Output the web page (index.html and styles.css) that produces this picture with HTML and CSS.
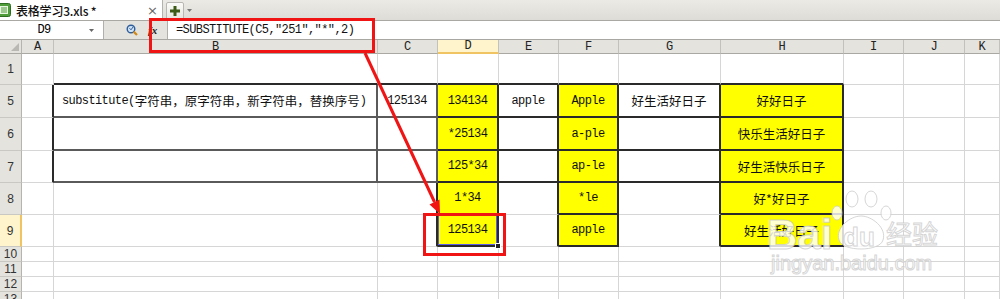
FILE: index.html
```html
<!DOCTYPE html>
<html>
<head>
<meta charset="utf-8">
<title>表格学习3.xls</title>
<link rel="stylesheet" href="styles.css">
</head>
<body>
<div class="app">
  <div class="tabbar">
    <div class="tab">
      <svg class="ticon" width="14" height="14" viewBox="0 0 14 14">
        <rect x="0.5" y="0.5" width="13" height="13" rx="2" fill="#4f9d3a" stroke="#2f6e22"/>
        <rect x="3" y="3" width="8" height="8" fill="#e8f5e0"/>
        <path d="M4 5h6M4 7h6M4 9h6" stroke="#4f9d3a" stroke-width="1"/>
      </svg>
      <span class="tname">表格学习3.xls *</span>
      <span class="tclose">×</span>
    </div>
    <div class="tadd">
      <svg width="12" height="12" viewBox="0 0 12 12"><path d="M6 1v10M1 6h10" stroke="#3d5b17" stroke-width="3"/></svg>
    </div>
    <div class="tmenu">
      <svg width="5" height="3" viewBox="0 0 5 3"><path d="M0 0h5L2.5 3z" fill="#777"/></svg>
    </div>
  </div>

  <div class="fbar">
    <div class="namebox">
      <span class="nb">D9</span>
      <svg class="dd" width="5" height="3" viewBox="0 0 5 3"><path d="M0 0h5L2.5 3z" fill="#666"/></svg>
    </div>
    <div class="tools">
      <svg class="mag" width="12" height="12" viewBox="0 0 12 12">
        <circle cx="5" cy="5" r="3.8" fill="#cfe3f7" stroke="#2f5d9a" stroke-width="1.4"/>
        <path d="M7.6 7.6L11 11" stroke="#d08a1a" stroke-width="2.2"/>
        <path d="M3.5 4.2l1.5 1.6 2.2-3" stroke="#2f5d9a" stroke-width="1" fill="none"/>
      </svg>
      <span class="fx">fx</span>
    </div>
    <div class="formula">=SUBSTITUTE(C5,"251","*",2)</div>
  </div>

  <div class="sheet">
    <div class="corner"><svg width="8" height="8" viewBox="0 0 8 8"><path d="M8 0v8H0z" fill="#b9b8b2"/></svg></div>
    <div class="ch">A</div><div class="ch">B</div><div class="ch">C</div><div class="ch on">D</div><div class="ch">E</div><div class="ch">F</div><div class="ch">G</div><div class="ch">H</div><div class="ch">I</div><div class="ch">J</div><div class="ch">K</div>

    <div class="rh">1</div>
    <div class="c"></div><div class="c B"></div><div class="c B"></div><div class="c B"></div><div class="c B"></div><div class="c B"></div><div class="c B"></div><div class="c B"></div><div class="c"></div><div class="c"></div><div class="c"></div>

    <div class="rh">5</div>
    <div class="c R"></div>
    <div class="c g R B cjk left"><span class="lat">substitute(</span>字符串，原字符串，新字符串，替换序号<span class="lat">)</span></div>
    <div class="c g R B">125134</div>
    <div class="c y R B">134134</div>
    <div class="c R B">apple</div>
    <div class="c y R B">Apple</div>
    <div class="c R B cjk">好生活好日子</div>
    <div class="c y R B cjk">好好日子</div>
    <div class="c"></div><div class="c"></div><div class="c"></div>

    <div class="rh">6</div>
    <div class="c R"></div>
    <div class="c g R B"></div>
    <div class="c g R B"></div>
    <div class="c y R B">*25134</div>
    <div class="c R B"></div>
    <div class="c y R B">a-ple</div>
    <div class="c R B"></div>
    <div class="c y R B cjk">快乐生活好日子</div>
    <div class="c"></div><div class="c"></div><div class="c"></div>

    <div class="rh">7</div>
    <div class="c R"></div>
    <div class="c g R B"></div>
    <div class="c g R B"></div>
    <div class="c y R B">125*34</div>
    <div class="c R B"></div>
    <div class="c y R B">ap-le</div>
    <div class="c R B"></div>
    <div class="c y R B cjk">好生活快乐日子</div>
    <div class="c"></div><div class="c"></div><div class="c"></div>

    <div class="rh">8</div>
    <div class="c"></div>
    <div class="c"></div>
    <div class="c R"></div>
    <div class="c y R B">1*34</div>
    <div class="c R"></div>
    <div class="c y R B">*le</div>
    <div class="c R"></div>
    <div class="c y R B cjk">好*好日子</div>
    <div class="c"></div><div class="c"></div><div class="c"></div>

    <div class="rh on">9</div>
    <div class="c"></div>
    <div class="c"></div>
    <div class="c R"></div>
    <div class="c y R B sel">125134<span class="selbox"></span><span class="handle"></span></div>
    <div class="c R"></div>
    <div class="c y R B">apple</div>
    <div class="c R"></div>
    <div class="c y R B cjk">好生活好日子</div>
    <div class="c"></div><div class="c"></div><div class="c"></div>

    <div class="rh sm">10</div>
    <div class="c"></div><div class="c"></div><div class="c"></div><div class="c"></div><div class="c"></div><div class="c"></div><div class="c"></div><div class="c"></div><div class="c"></div><div class="c"></div><div class="c"></div>
    <div class="rh sm">11</div>
    <div class="c"></div><div class="c"></div><div class="c"></div><div class="c"></div><div class="c"></div><div class="c"></div><div class="c"></div><div class="c"></div><div class="c"></div><div class="c"></div><div class="c"></div>
    <div class="rh sm">12</div>
    <div class="c"></div><div class="c"></div><div class="c"></div><div class="c"></div><div class="c"></div><div class="c"></div><div class="c"></div><div class="c"></div><div class="c"></div><div class="c"></div><div class="c"></div>
    <div class="rh sm">13</div>
    <div class="c"></div><div class="c"></div><div class="c"></div><div class="c"></div><div class="c"></div><div class="c"></div><div class="c"></div><div class="c"></div><div class="c"></div><div class="c"></div><div class="c"></div>
  </div>

  <svg class="ov" width="1000" height="299" viewBox="0 0 1000 299">
    <g class="wm">
      <text class="wm-bai" x="767" y="249">Bai</text>
      <ellipse cx="837" cy="213" rx="5" ry="7"/>
      <ellipse cx="852" cy="199" rx="6" ry="8"/>
      <ellipse cx="871" cy="199" rx="6" ry="8"/>
      <ellipse cx="886" cy="213" rx="5" ry="7"/>
      <path d="M839 240C835 228 850 216 861 216C872 216 887 228 883 240C880 252 842 252 839 240Z"/>
      <text class="wm-du" x="843" y="246">du</text>
      <text class="wm-jy" x="886" y="244">经验</text>
      <text class="wm-url" x="771" y="270">jingyan.baidu.com</text>
    </g>
    <rect class="rbox" x="150.5" y="19.5" width="223" height="32"/>
    <rect class="rbox" x="424.5" y="214.5" width="80" height="40"/>
    <line class="rline" x1="365" y1="53" x2="434.5" y2="202"/>
    <polygon class="rhead" points="440,214 439.5,199.5 429.5,204.5"/>
  </svg>
</div>
</body>
</html>
```

FILE: styles.css
```css
* { box-sizing: border-box; margin: 0; padding: 0; }
html, body { width: 1000px; height: 299px; overflow: hidden; background: #fff; }
body { font-family: "Liberation Sans", "Noto Sans CJK SC", sans-serif; color: #000; }

.app { position: relative; width: 1000px; height: 299px; overflow: hidden; background: #fff; }

/* tab bar */
.tabbar {
  height: 21px;
  display: flex;
  align-items: stretch;
  background: linear-gradient(#ebeae5, #dddcd6);
  border-bottom: 1px solid #a9a8a2;
}
.tab {
  width: 163px;
  background: #fff;
  border-right: 1px solid #b3b2ac;
  display: flex;
  align-items: center;
  gap: 5px;
}
.ticon { margin-left: -3px; flex: none; }
.tname { font-family: "Noto Sans CJK SC", sans-serif; font-size: 12px; font-weight: 500; color: #111; letter-spacing: -0.2px; }
.tclose { margin-left: auto; margin-right: 4px; font-size: 13px; color: #666; font-family: "DejaVu Sans", sans-serif; }
.tadd {
  margin-left: 3px;
  margin-top: 2px;
  width: 18px;
  height: 18px;
  border: 1px solid #b8b7b1;
  border-radius: 2px 2px 0 0;
  background: linear-gradient(#fbfbf9, #e6e5e0);
  display: flex;
  align-items: center;
  justify-content: center;
}
.tmenu { width: 10px; display: flex; align-items: center; justify-content: center; }

/* formula bar */
.fbar {
  height: 19px;
  display: flex;
  background: #e4e3de;
  border-bottom: 1px solid #a8a7a1;
}
.namebox {
  width: 104px;
  background: #fff;
  border-right: 1px solid #b0afa9;
  display: flex;
  align-items: center;
}
.nb { width: 88px; text-align: center; font-family: "Liberation Mono", monospace; font-size: 12px; letter-spacing: -0.6px; }
.dd { margin-left: 1px; }
.tools { width: 63px; display: flex; align-items: center; }
.mag { margin-left: 22px; }
.fx { margin-left: 10px; font-family: "Liberation Serif", serif; font-style: italic; font-weight: bold; font-size: 11px; color: #222; }
.formula {
  flex: 1;
  background: #fff;
  border-left: 1px solid #b0afa9;
  padding-left: 8px;
  display: flex;
  align-items: center;
  font-family: "Liberation Mono", monospace;
  font-size: 12px;
  letter-spacing: -0.6px;
  white-space: nowrap;
  color: #111;
}

/* sheet */
.sheet {
  display: grid;
  grid-template-columns: 22px 32px 324px 60px 61px 60px 60px 102px 123px 60px 61px 35px;
  grid-template-rows: 14px 31px 33px 33px 32px 32px 32px 15px 15px 15px 15px;
}
.corner {
  background: #e4e3de;
  border-right: 1px solid #b5b4ae;
  border-bottom: 1px solid #a9a8a2;
  display: flex;
  align-items: flex-end;
  justify-content: flex-end;
  padding: 0 2px 2px 0;
}
.ch {
  background: #e4e3de;
  border-right: 1px solid #c2c1bb;
  border-bottom: 1px solid #a9a8a2;
  display: flex;
  align-items: center;
  justify-content: center;
  font-family: "Liberation Mono", monospace;
  font-size: 12px;
  color: #222;
}
.ch.on { background: #fff4cc; border-bottom: 2px solid #f0c462; }
.rh {
  background: #e4e3de;
  border-right: 1px solid #b5b4ae;
  border-bottom: 1px solid #c9c8c2;
  display: flex;
  align-items: center;
  justify-content: center;
  font-family: "Liberation Sans", sans-serif;
  font-size: 12px;
  color: #333;
}
.rh.on { background: #fff4cc; border-right: 2px solid #f0c462; }
.rh.sm { font-size: 12px; line-height: 14px; }

.c {
  border-right: 1px solid #d6d6d6;
  border-bottom: 1px solid #d6d6d6;
  display: flex;
  align-items: center;
  justify-content: center;
  font-family: "Liberation Mono", monospace;
  font-size: 12px;
  letter-spacing: -0.6px;
  white-space: nowrap;
  overflow: hidden;
  color: #111;
}
.R { border-right: 2px solid #2a2a2a; }
.B { border-bottom: 2px solid #2a2a2a; }
.g.R { border-right-color: #5a5a5a; }
.g.B { border-bottom-color: #5a5a5a; }
.y { background: #ffff00; }
.cjk { font-family: "Noto Sans CJK SC", sans-serif; font-size: 12.5px; letter-spacing: 0; }
.lat { font-family: "Liberation Mono", monospace; font-size: 12px; letter-spacing: -0.6px; }
.left { justify-content: flex-start; padding-left: 8px; }

.sel { position: relative; overflow: visible; }
.selbox { position: absolute; inset: 0; border: 1px solid #5b5bea; }
.handle {
  position: absolute;
  right: -4px;
  bottom: -4px;
  width: 6px;
  height: 6px;
  background: #222;
  border: 1px solid #fff;
}

/* overlay */
.ov { position: absolute; left: 0; top: 0; pointer-events: none; }
.wm ellipse, .wm path, .wm text {
  fill: rgba(255, 255, 255, 0.82);
  stroke: rgba(200, 200, 200, 0.75);
  stroke-width: 1;
}
.wm-bai { font-family: "Liberation Sans", sans-serif; font-weight: bold; font-size: 42px; }
.wm-du { font-family: "Liberation Sans", sans-serif; font-weight: bold; font-size: 26px; }
.wm-jy { font-family: "Noto Sans CJK SC", sans-serif; font-size: 26px; }
.wm-url { font-family: "Liberation Sans", sans-serif; font-size: 20px; }
.rbox { fill: none; stroke: #f01414; stroke-width: 3; }
.rline { stroke: #f01414; stroke-width: 3; }
.rhead { fill: #f01414; }
```
